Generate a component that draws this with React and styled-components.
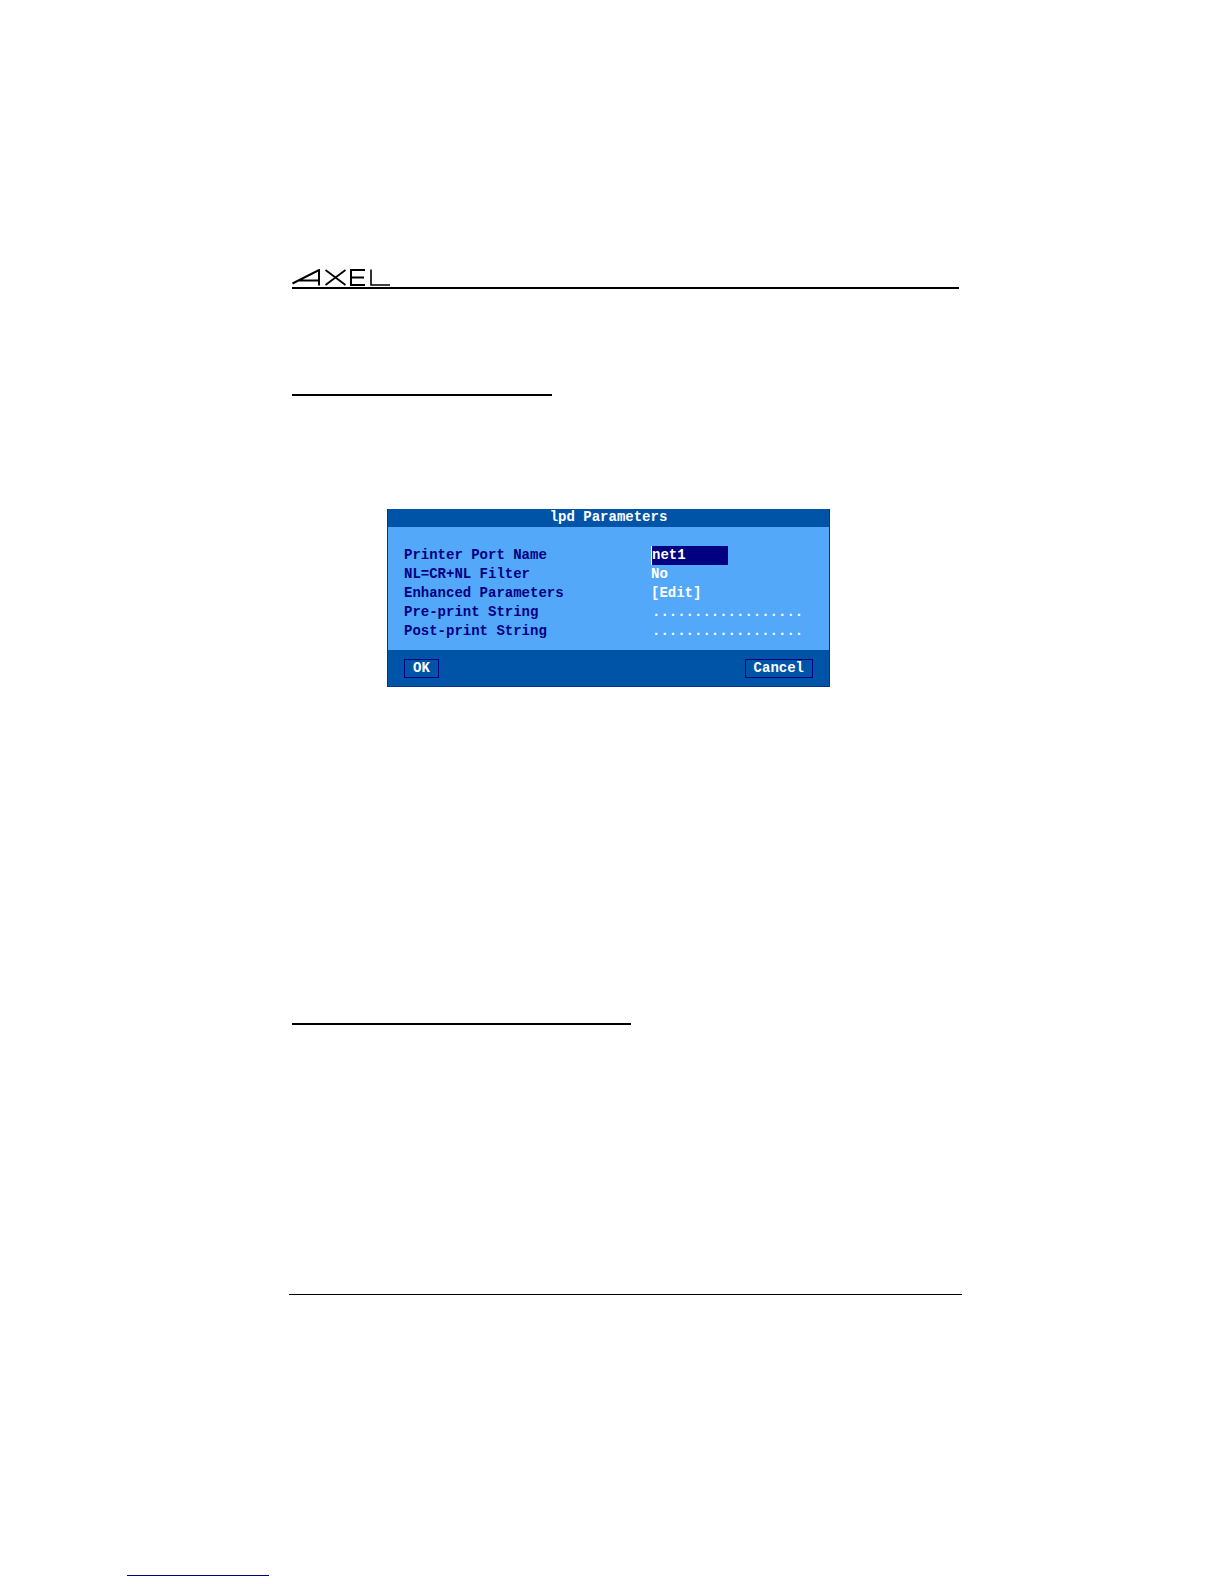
import React from 'react';
import styled, { createGlobalStyle } from 'styled-components';

const navy = '#000080';
const edge = '#003399';
const blue = '#0054a8';
const sky = '#53a8fa';

const GlobalStyle = createGlobalStyle`
  *, *::before, *::after { box-sizing: border-box; }
  body {
    margin: 0;
    background: #fff;
    font: bold 14px/19px "Liberation Mono", "DejaVu Sans Mono", monospace;
  }
  input, select, button {
    margin: 0;
    padding: 0;
    border: 0;
    border-radius: 0;
    background: transparent;
    color: #fff;
    font: inherit;
    appearance: none;
    outline: none;
  }
`;

const Page = styled.div`
  display: flex;
  flex-direction: column;
  padding: 269px 0 8px;
`;

const Sheet = styled.main`
  margin: 0 262px 0 289px;
  display: flex;
  flex-direction: column;
`;

const Content = styled.div`
  display: flex;
  flex-direction: column;
  padding: 0 3px;
`;

const Header = styled.header`
  border-bottom: 2px solid #000;
`;

const Logo = styled.svg`
  display: block;
  width: 98px;
  height: 18px;
`;

const Rule = styled.hr`
  width: ${(p) => p.$width || 'auto'};
  max-width: 100%;
  height: ${(p) => p.$weight || 2}px;
  margin: ${(p) => p.$gap}px 0 0 ${(p) => p.$indent || 0}px;
  border: 0;
  background: ${(p) => p.$color || '#000'};
`;

const Dialog = styled.form`
  width: 443px;
  max-width: 100%;
  margin: 113px 0 0 95px;
  border: 1px solid ${edge};
  border-top: 0;
  background: ${blue};
`;

const Title = styled.h1`
  margin: 0;
  padding-bottom: 2px;
  font: inherit;
  line-height: 16px;
  text-align: center;
  color: #fff;
`;

const Fields = styled.div`
  padding: 19px 16px 9px;
  background: ${sky};
`;

const Row = styled.div`
  display: grid;
  grid-template-columns: 247px 1fr;
  height: 19px;
`;

const Label = styled.label`
  color: ${navy};
`;

const TextField = styled.input`
  width: ${(p) => (p.$active ? '77px' : '100%')};
  height: 19px;
  border-left: 1px solid ${(p) => (p.$active ? '#fff' : 'transparent')};
  background: ${(p) => (p.$active ? navy : 'transparent')};
`;

const Choice = styled.select`
  height: 19px;
`;

const EditButton = styled.button`
  height: 19px;
  justify-self: start;
`;

const Footer = styled.div`
  display: flex;
  justify-content: space-between;
  padding: 9px 16px 8px;
`;

const FooterButton = styled.button`
  height: 19px;
  padding: 0 8px;
  border: 1px solid ${navy};
  line-height: 17px;
`;

export default function App() {
  return (
    <>
      <GlobalStyle />
      <Page>
        <Sheet>
          <Content>
            <Header>
              <Logo viewBox="0 0 98 18" fill="none" stroke="#000" strokeWidth="2" role="img" aria-label="Axel">
                <path d="M0.5 14.5 27 1V16.5M6 11.5H27" />
                <path d="M33.5 1 53.5 16M53.5 1 33.5 16" strokeWidth="1.7" />
                <path d="M73 1H59V16H73M59 8.5H72" />
                <path d="M79 0.5V16H98" strokeWidth="1.6" />
              </Logo>
            </Header>
            <Rule $gap={105} $width="260px" />
            <Dialog onSubmit={(e) => e.preventDefault()}>
              <Title>lpd Parameters</Title>
              <Fields>
                <Row>
                  <Label htmlFor="port">Printer Port Name</Label>
                  <TextField id="port" $active defaultValue="net1" />
                </Row>
                <Row>
                  <Label htmlFor="filter">NL=CR+NL Filter</Label>
                  <Choice id="filter" defaultValue="No">
                    <option>No</option>
                    <option>Yes</option>
                  </Choice>
                </Row>
                <Row>
                  <Label htmlFor="enhanced">Enhanced Parameters</Label>
                  <EditButton id="enhanced" type="button">[Edit]</EditButton>
                </Row>
                <Row>
                  <Label htmlFor="pre">Pre-print String</Label>
                  <TextField id="pre" defaultValue=".................." />
                </Row>
                <Row>
                  <Label htmlFor="post">Post-print String</Label>
                  <TextField id="post" defaultValue=".................." />
                </Row>
              </Fields>
              <Footer>
                <FooterButton type="submit">OK</FooterButton>
                <FooterButton type="button">Cancel</FooterButton>
              </Footer>
            </Dialog>
            <Rule $gap={336} $width="339px" />
          </Content>
          <Rule $gap={269} $weight={1} />
        </Sheet>
        <Rule $gap={280} $weight={1} $width="142px" $indent={127} $color={navy} />
      </Page>
    </>
  );
}
